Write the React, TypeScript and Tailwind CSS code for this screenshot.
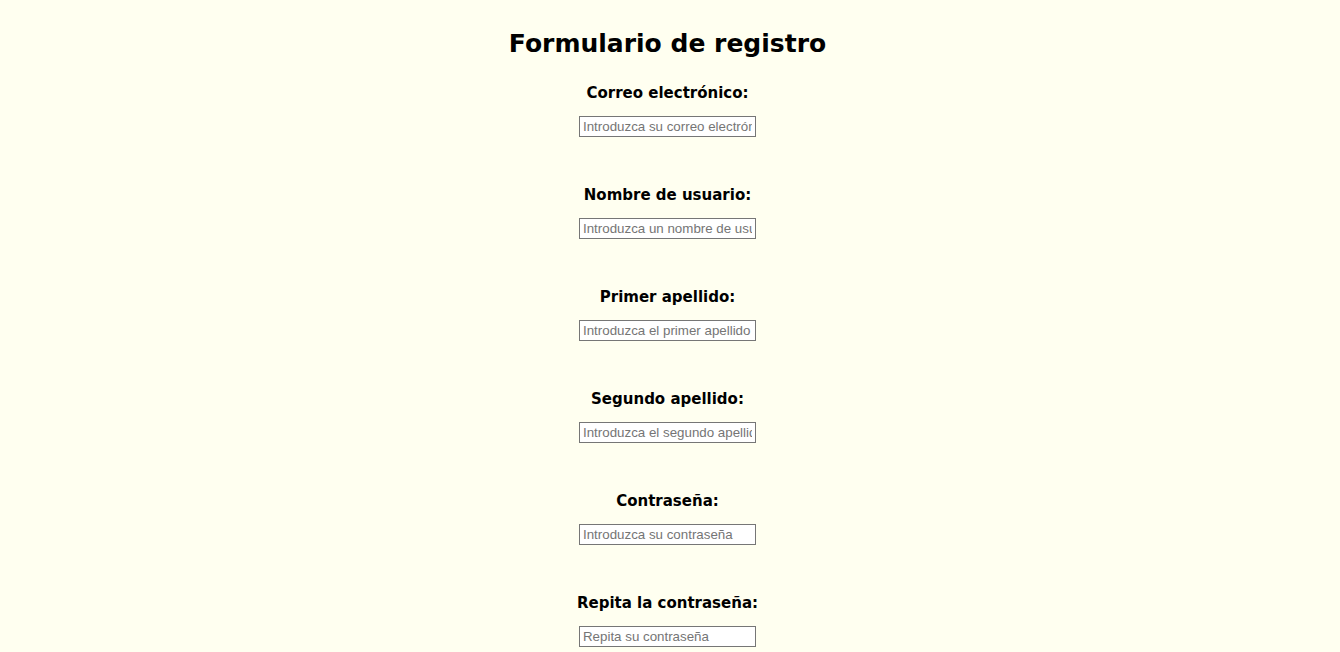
const fields = [
  { label: "Correo electrónico:", placeholder: "Introduzca su correo electrónico", type: "email" },
  { label: "Nombre de usuario:", placeholder: "Introduzca un nombre de usuario", type: "text" },
  { label: "Primer apellido:", placeholder: "Introduzca el primer apellido", type: "text" },
  { label: "Segundo apellido:", placeholder: "Introduzca el segundo apellido", type: "text" },
  { label: "Contraseña:", placeholder: "Introduzca su contraseña", type: "password" },
  { label: "Repita la contraseña:", placeholder: "Repita su contraseña", type: "password" },
];

export default function App() {
  return (
    <div className="min-h-screen bg-[#fffff0] text-black font-['DejaVu_Sans',Verdana,sans-serif]">
      <form className="flex flex-col items-center pt-[29px] pr-[5px]">
        <h1 className="text-[25px] leading-[30px] font-bold">Formulario de registro</h1>
        <div className="flex flex-col items-center mt-[25px] gap-[49px]">
          {fields.map((f) => (
            <div key={f.label} className="flex flex-col items-center">
              <label className="text-[15px] leading-[18px] font-bold">{f.label}</label>
              <input
                type={f.type}
                placeholder={f.placeholder}
                className="mt-[14px] w-[177px] h-[21px] border border-[#767676] bg-white px-[3px] text-[13.33px] font-['Liberation_Sans',Arial,sans-serif] placeholder:text-[#757575] outline-none"
              />
            </div>
          ))}
        </div>
      </form>
    </div>
  );
}
